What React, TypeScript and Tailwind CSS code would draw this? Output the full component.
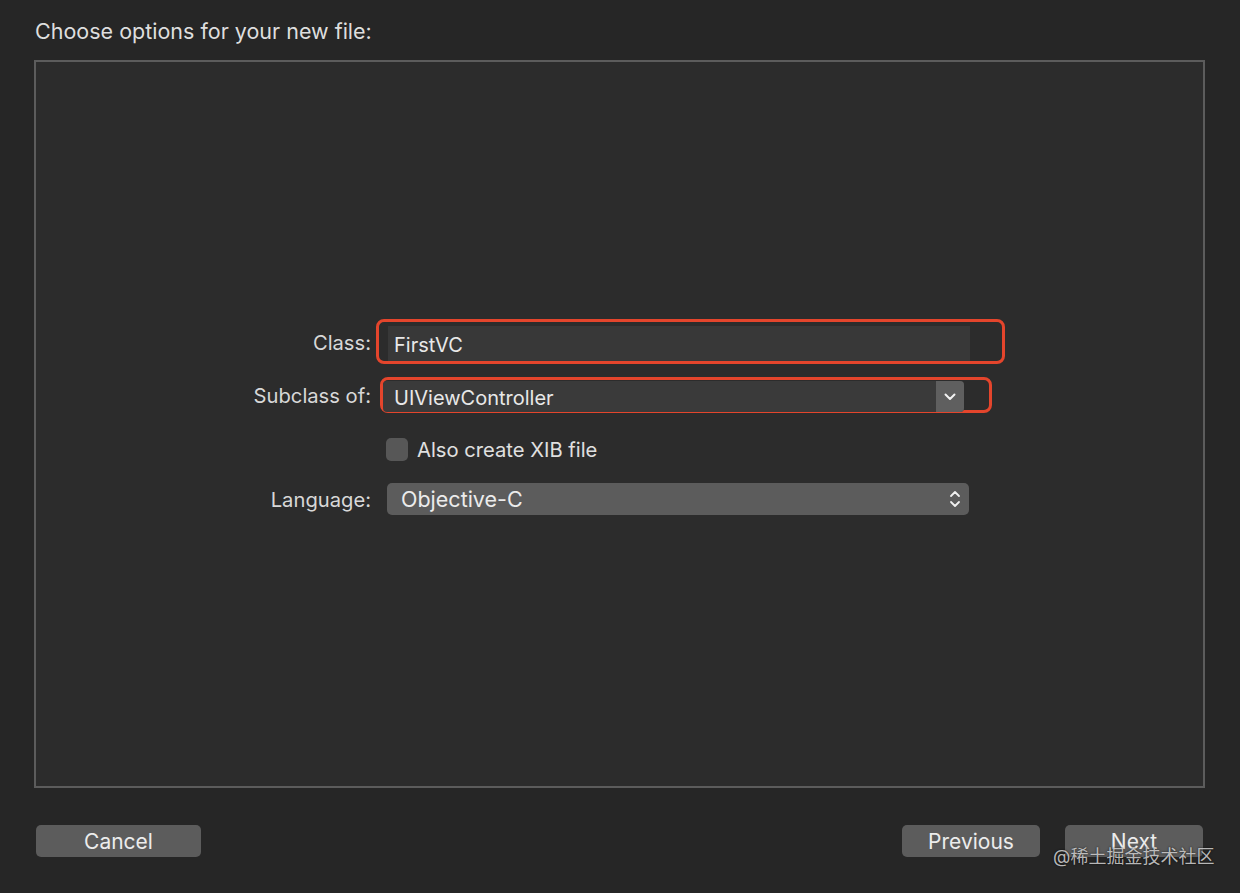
import React from "react";

const font = { fontFamily: "Inter, 'Liberation Sans', 'Noto Sans CJK SC', sans-serif" };

function ChevronDown() {
  return (
    <svg width="12" height="8" viewBox="0 0 12 8" fill="none">
      <path d="M1.5 1.5 L6 6 L10.5 1.5" stroke="#f2f2f2" strokeWidth="2" strokeLinecap="round" strokeLinejoin="round" />
    </svg>
  );
}

function UpDown() {
  return (
    <svg width="12" height="22" viewBox="0 0 12 22" fill="none">
      <path d="M2 8 L6 4 L10 8" stroke="#f0f0f0" strokeWidth="1.8" strokeLinecap="round" strokeLinejoin="round" />
      <path d="M2 14 L6 18 L10 14" stroke="#f0f0f0" strokeWidth="1.8" strokeLinecap="round" strokeLinejoin="round" />
    </svg>
  );
}

export default function App() {
  return (
    <div className="relative w-[1240px] h-[893px] bg-[#262626] flex flex-col overflow-hidden" style={font}>
      <div className="pt-[18px] pl-[35px] h-[43px] text-[21.5px] leading-[26px] text-[#dedede]">
        Choose options for your new file:
      </div>
      <div className="mt-[17px] ml-[34px] w-[1171px] h-[728px] border-2 border-[#5c5c5c] bg-[#2c2c2c] pt-[257px] flex flex-col">
        {/* Class row */}
        <div className="flex items-center h-[45px]">
          <div className="w-[335px] pt-[3px] text-right text-[20.2px] text-[#d8d8d8]">Class:</div>
          <div className="ml-[5px] w-[629px] h-[45px] border-[3px] border-[#e4452c] rounded-[8px] pl-[9px] pt-[4px]">
            <div className="w-[582px] h-[35px] bg-[#383838] flex items-center pl-[6px] pt-[2px] text-[20px] text-[#e8e8e8]">
              FirstVC
            </div>
          </div>
        </div>
        {/* Subclass row */}
        <div className="flex items-center h-[36px] mt-[13px]">
          <div className="w-[335px] pt-[2px] text-right text-[20.2px] text-[#d8d8d8]">Subclass of:</div>
          <div className="ml-[9px] w-[612px] h-[36px] border-[3px] border-[#e4452c] rounded-[8px] pt-[1px]">
            <div className="w-[581px] h-[31px] bg-[#3a3a3a] rounded-[4px] flex items-center">
              <div className="flex-1 pl-[11px] pt-[2px] text-[20px] text-[#e8e8e8]">UIViewController</div>
              <div className="w-[28px] h-[31px] bg-[#5f5f5f] rounded-r-[4px] flex items-center justify-center">
                <ChevronDown />
              </div>
            </div>
          </div>
        </div>
        {/* Checkbox row */}
        <div className="flex items-center h-[23px] mt-[25px]">
          <div className="w-[350px]" />
          <div className="w-[22px] h-[23px] rounded-[5px] bg-[#575757]" />
          <div className="ml-[9px] pt-[2px] text-[20.2px] text-[#e0e0e0]">Also create XIB file</div>
        </div>
        {/* Language row */}
        <div className="flex items-center h-[32px] mt-[22px]">
          <div className="w-[335px] pt-[2px] text-right text-[20.2px] text-[#d8d8d8]">Language:</div>
          <div className="ml-[16px] w-[582px] h-[32px] bg-[#5c5c5c] rounded-[5px] flex items-center">
            <div className="flex-1 pl-[14px] pt-[1px] text-[21.5px] text-[#ececec]">Objective-C</div>
            <div className="w-[28px] flex items-center justify-center">
              <UpDown />
            </div>
          </div>
        </div>
      </div>
      {/* Buttons */}
      <div className="mt-[37px] flex items-center h-[32px]">
        <div className="ml-[36px] w-[165px] h-[32px] rounded-[5px] bg-[#5c5c5c] flex items-center justify-center pt-[1px] text-[21px] text-[#ececec]">
          Cancel
        </div>
        <div className="flex-1" />
        <div className="w-[138px] h-[32px] rounded-[5px] bg-[#5c5c5c] flex items-center justify-center pt-[1px] text-[21px] text-[#ececec]">
          Previous
        </div>
        <div className="ml-[25px] mr-[37px] w-[138px] h-[32px] rounded-[5px] bg-[#5c5c5c] flex items-center justify-center pt-[1px] text-[21px] text-[#ececec]">
          Next
        </div>
      </div>
      <div
        className="absolute left-[1053px] top-[844px] text-[18px] leading-[26px] text-[#d6d6d6]/85 whitespace-nowrap"
        style={{ textShadow: "0 0 2px rgba(0,0,0,0.8)" }}
      >
        @稀土掘金技术社区
      </div>
    </div>
  );
}
